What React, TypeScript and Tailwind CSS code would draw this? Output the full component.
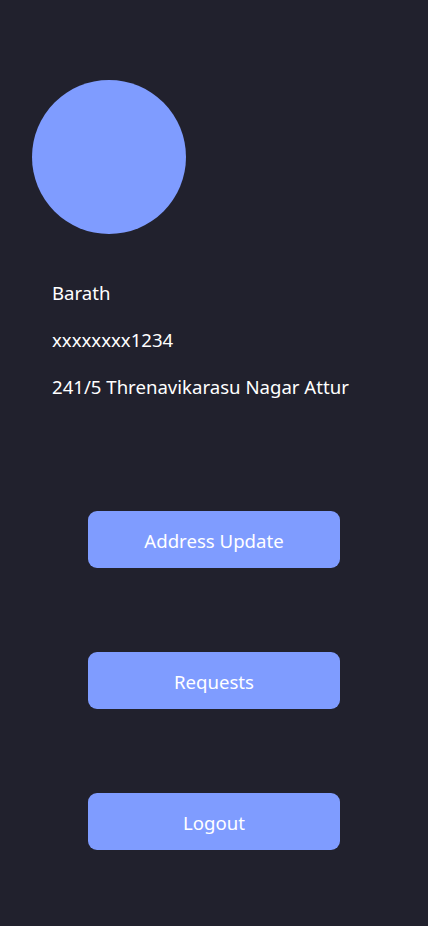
export default function App() {
  return (
    <div className="min-h-[926px] w-full bg-[#21212d] text-white" style={{ fontFamily: '"Noto Sans", "Open Sans", sans-serif' }}>
      <div className="flex flex-col pt-[80px]">
        <div className="ml-[32px] h-[154px] w-[154px] rounded-full bg-[#7f9cff]" />
        <div className="mt-[45px] ml-[52px] flex flex-col gap-[20px] text-[18.6px] leading-[27px]">
          <p>Barath</p>
          <p>xxxxxxxx1234</p>
          <p>241/5 Threnavikarasu Nagar Attur</p>
        </div>
        <div className="mt-[111px] ml-[88px] flex flex-col gap-[84px]">
          {["Address Update", "Requests", "Logout"].map((t) => (
            <button key={t} className="h-[57px] w-[252px] rounded-[9px] bg-[#7f9cff] pt-[2px] text-[18.6px] text-white">
              {t}
            </button>
          ))}
        </div>
      </div>
    </div>
  );
}
